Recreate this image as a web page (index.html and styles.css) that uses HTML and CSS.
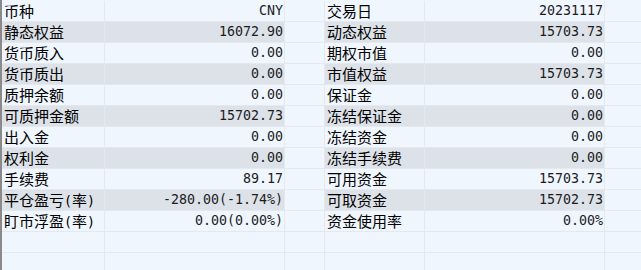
FILE: index.html
```html
<!DOCTYPE html>
<html lang="zh">
<head>
<meta charset="utf-8">
<link rel="stylesheet" href="styles.css">
</head>
<body>
<div class="panel">
  <div class="grid">
    <div class="row"><div class="lbl">币种</div><div class="val">CNY</div><div class="gap"></div><div class="lbl">交易日</div><div class="val">20231117</div><div class="fill"></div></div>
    <div class="row alt"><div class="lbl">静态权益</div><div class="val">16072.90</div><div class="gap"></div><div class="lbl">动态权益</div><div class="val">15703.73</div><div class="fill"></div></div>
    <div class="row"><div class="lbl">货币质入</div><div class="val">0.00</div><div class="gap"></div><div class="lbl">期权市值</div><div class="val">0.00</div><div class="fill"></div></div>
    <div class="row alt"><div class="lbl">货币质出</div><div class="val">0.00</div><div class="gap"></div><div class="lbl">市值权益</div><div class="val">15703.73</div><div class="fill"></div></div>
    <div class="row"><div class="lbl">质押余额</div><div class="val">0.00</div><div class="gap"></div><div class="lbl">保证金</div><div class="val">0.00</div><div class="fill"></div></div>
    <div class="row alt"><div class="lbl">可质押金额</div><div class="val">15702.73</div><div class="gap"></div><div class="lbl">冻结保证金</div><div class="val">0.00</div><div class="fill"></div></div>
    <div class="row"><div class="lbl">出入金</div><div class="val">0.00</div><div class="gap"></div><div class="lbl">冻结资金</div><div class="val">0.00</div><div class="fill"></div></div>
    <div class="row alt"><div class="lbl">权利金</div><div class="val">0.00</div><div class="gap"></div><div class="lbl">冻结手续费</div><div class="val">0.00</div><div class="fill"></div></div>
    <div class="row"><div class="lbl">手续费</div><div class="val">89.17</div><div class="gap"></div><div class="lbl">可用资金</div><div class="val">15703.73</div><div class="fill"></div></div>
    <div class="row alt"><div class="lbl">平仓盈亏<span class="p">(</span>率<span class="p">)</span></div><div class="val">-280.00(-1.74%)</div><div class="gap"></div><div class="lbl">可取资金</div><div class="val">15702.73</div><div class="fill"></div></div>
    <div class="row"><div class="lbl">盯市浮盈<span class="p">(</span>率<span class="p">)</span></div><div class="val">0.00(0.00%)</div><div class="gap"></div><div class="lbl">资金使用率</div><div class="val">0.00%</div><div class="fill"></div></div>
    <div class="row"><div class="lbl"></div><div class="val"></div><div class="gap"></div><div class="lbl"></div><div class="val"></div><div class="fill"></div></div>
    <div class="row"><div class="lbl"></div><div class="val"></div><div class="gap"></div><div class="lbl"></div><div class="val"></div><div class="fill"></div></div>
  </div>
</div>
</body>
</html>
```
FILE: styles.css
```css
html, body {
  margin: 0;
  padding: 0;
  background: #f0f6fe;
}
body {
  width: 641px;
  height: 270px;
  overflow: hidden;
}
.panel {
  height: 270px;
  border-left: 2px solid #8a8a8a;
  box-sizing: border-box;
  background: #f0f6fe;
  padding-top: 1px;
}
.grid {
  display: flex;
  flex-direction: column;
}
.row {
  display: grid;
  grid-template-columns: 103px 180px 40px 100px 180px 1fr;
  height: 21px;
}
.row > div {
  box-sizing: border-box;
  border-right: 1px solid #e5e9ef;
  border-bottom: 1px solid #e5e9ef;
  height: 21px;
  line-height: 20px;
  white-space: nowrap;
  overflow: hidden;
  color: #000;
}
.row > .fill {
  border-right: none;
}
.row.alt > .lbl,
.row.alt > .val {
  background: #dde2e9;
}
.lbl {
  font-family: "Noto Sans CJK SC", "Noto Sans", sans-serif;
  font-size: 15px;
  padding-left: 2px;
  color: #111;
}
.lbl .p {
  font-family: "DejaVu Sans Mono", monospace;
  font-size: 13.3px;
}
.val {
  font-family: "DejaVu Sans Mono", "Liberation Mono", monospace;
  font-size: 13.3px;
  text-align: right;
  padding-right: 1px;
}
.row > .val {
  color: #1c1c1c;
}
```
